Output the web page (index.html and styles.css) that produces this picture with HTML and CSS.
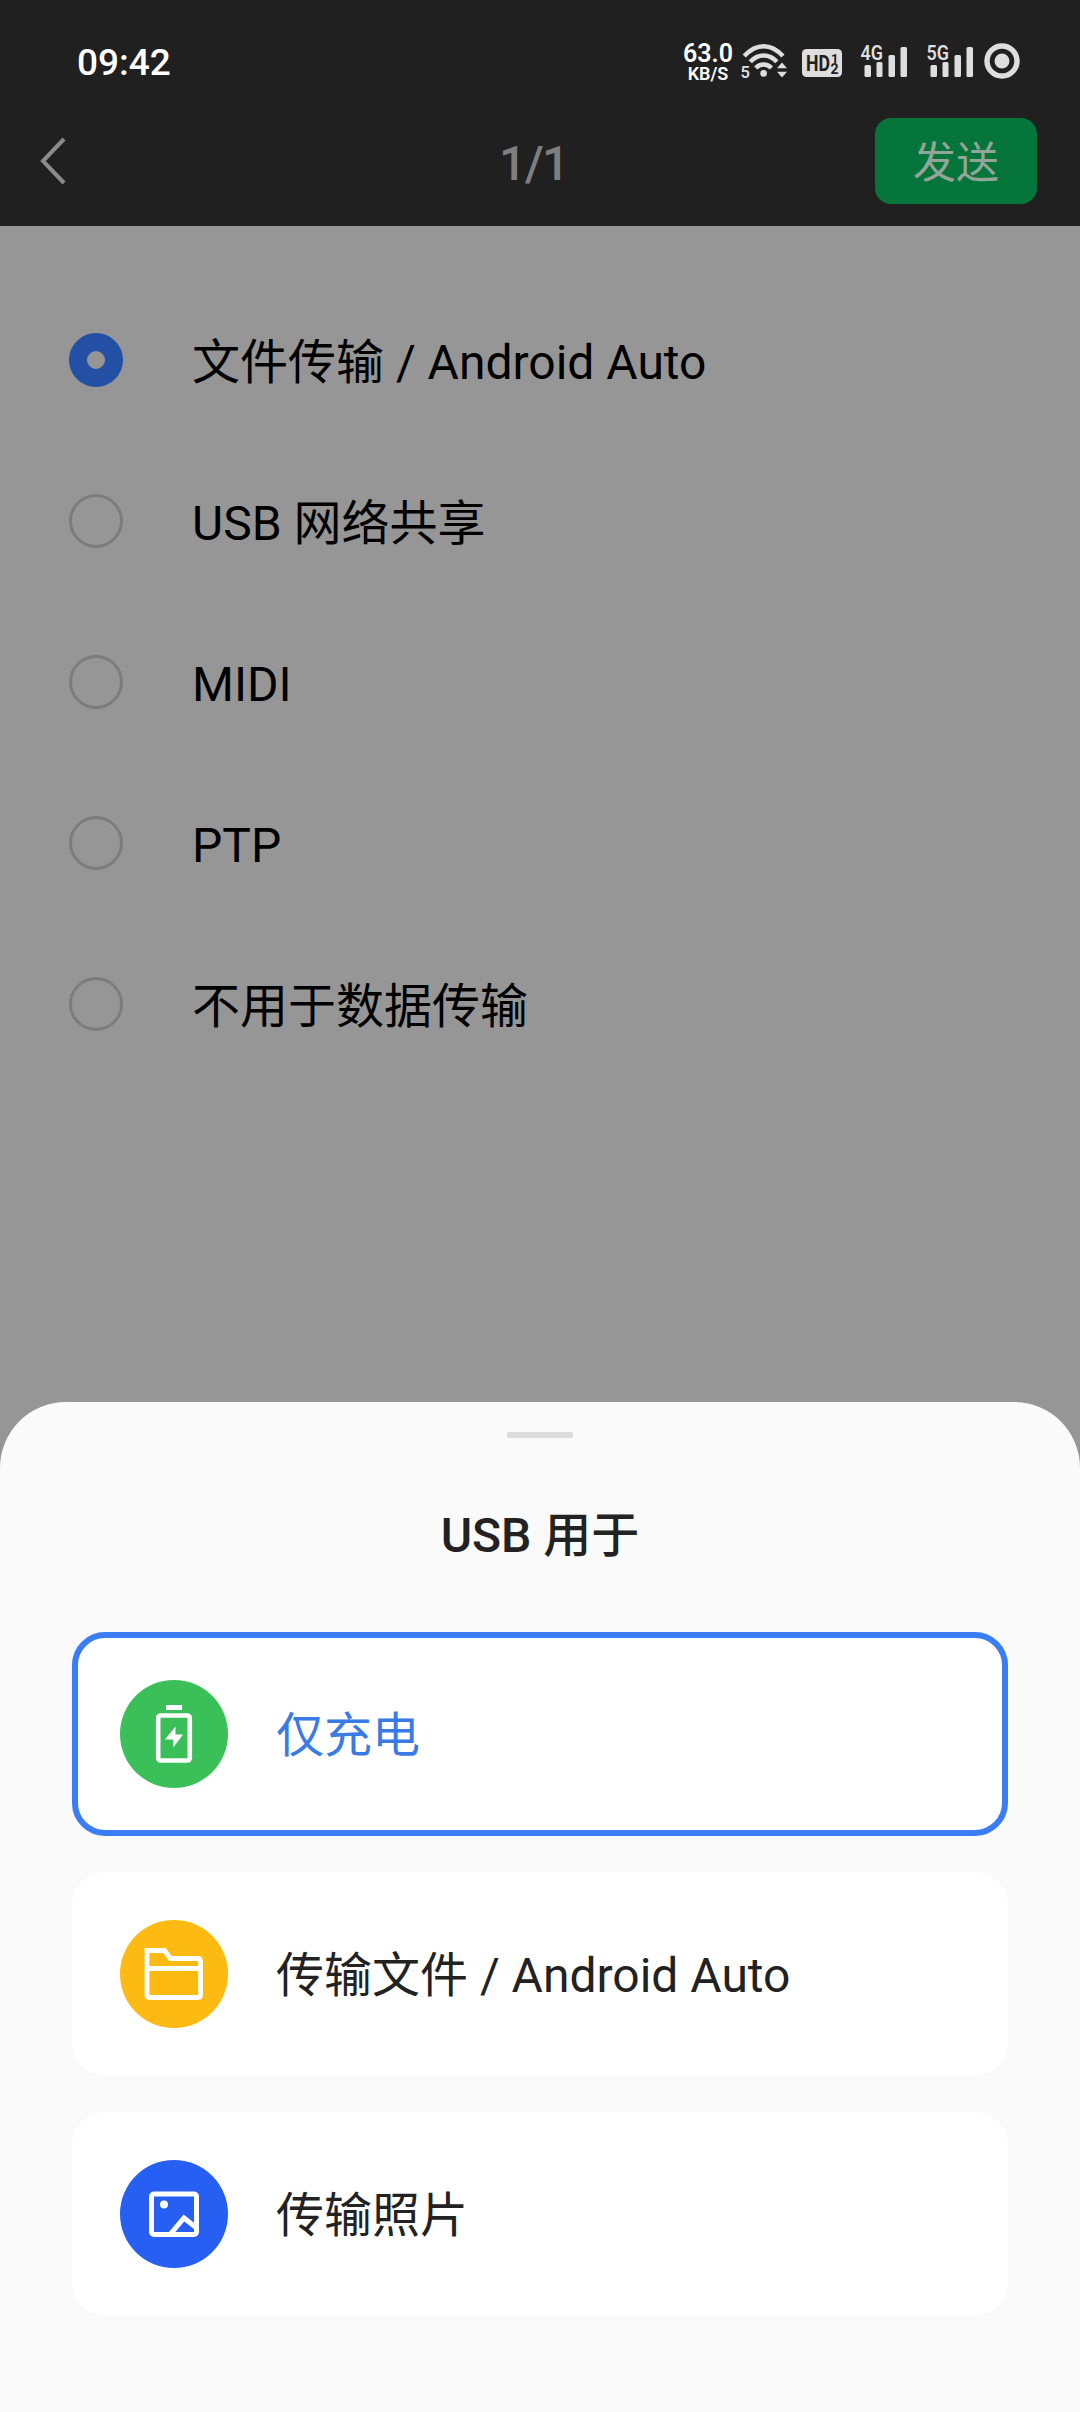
FILE: index.html
```html
<!DOCTYPE html>
<html lang="zh-CN">
<head>
<meta charset="utf-8">
<title>USB 用于</title>
<link rel="stylesheet" href="styles.css">
</head>
<body>
<div class="screen">
  <header class="top">
    <div class="status">
      <span class="clock">09:42</span>
      <div class="indicators">
        <div class="speed"><span class="speed-value">63.0</span><span class="speed-unit">KB/S</span></div>
        <svg class="wifi" width="48" height="36" viewBox="0 0 48 36">
          <g fill="none" stroke="#dedede" stroke-width="4.4">
            <path d="M3.2 13Q12.500 3.200 22.600 3.200T42 13"/>
            <path d="M9.300 18.800Q15 12.500 22.600 12.500T35.900 18.800"/>
            <path d="M14.800 25Q18 21.500 22.600 21.500T30.400 25"/>
          </g>
          <circle cx="22.600" cy="30.400" r="3.300" fill="#dedede"/>
          <path d="M36 25.300 41 19.500 46 25.300ZM36 28.700 41 34.500 46 28.700Z" fill="#dedede"/>
          <text x="-0.500" y="34.700" font-size="16.500" class="badge-text">5</text>
        </svg>
        <svg class="hd" width="40" height="28" viewBox="0 0 40 28">
          <rect width="40" height="28" rx="4.500" fill="#dedede"/>
          <text x="4" y="22" font-size="22" textLength="24" lengthAdjust="spacingAndGlyphs" class="hd-text">HD</text>
          <text x="29" y="13.500" font-size="13" class="hd-text">1</text>
          <text x="28.500" y="25" font-size="14" class="hd-text">2</text>
        </svg>
        <svg class="signal" width="48" height="34" viewBox="0 0 48 34">
          <g fill="#dedede"><rect x="4.500" y="21" width="6.500" height="12" rx="1.500"/><rect x="16.500" y="18" width="6" height="15" rx="1.500"/><rect x="28.500" y="11" width="6.500" height="22" rx="1.500"/><rect x="40.500" y="3" width="6.500" height="30" rx="1.500"/></g>
          <text x="0.500" y="16" font-size="20" textLength="22.500" lengthAdjust="spacingAndGlyphs" class="badge-text">4G</text>
        </svg>
        <svg class="signal" width="48" height="34" viewBox="0 0 48 34">
          <g fill="#dedede"><rect x="4.500" y="21" width="6.500" height="12" rx="1.500"/><rect x="16.500" y="18" width="6" height="15" rx="1.500"/><rect x="28.500" y="11" width="6.500" height="22" rx="1.500"/><rect x="40.500" y="3" width="6.500" height="30" rx="1.500"/></g>
          <text x="0.500" y="16" font-size="20" textLength="22.500" lengthAdjust="spacingAndGlyphs" class="badge-text">5G</text>
        </svg>
        <svg class="record" width="36" height="36" viewBox="0 0 36 36">
          <circle cx="18" cy="18" r="15" fill="none" stroke="#dedede" stroke-width="5.400"/>
          <circle cx="18" cy="18" r="7.500" fill="#dedede"/>
        </svg>
      </div>
    </div>
    <nav class="bar">
      <svg class="back" width="28" height="48" viewBox="0 0 28 48"><path d="M25 2 4 24 25 46" fill="none" stroke="#8b8b8b" stroke-width="4"/></svg>
      <span class="count">1/1</span>
      <button class="send">发送</button>
    </nav>
  </header>
  <main class="options">
    <div class="option"><span class="radio checked"></span><span>文件传输 / Android Auto</span></div>
    <div class="option"><span class="radio"></span><span>USB 网络共享</span></div>
    <div class="option"><span class="radio"></span><span>MIDI</span></div>
    <div class="option"><span class="radio"></span><span>PTP</span></div>
    <div class="option"><span class="radio"></span><span>不用于数据传输</span></div>
  </main>
  <section class="sheet">
    <div class="handle"></div>
    <h1 class="title">USB 用于</h1>
    <div class="cards">
      <div class="card selected">
        <svg class="icon" width="108" height="108" viewBox="0 0 108 108">
          <circle cx="54" cy="54" r="54" fill="#3bbf58"/>
          <path d="M46 25h16v5H46z" fill="#fff"/>
          <rect x="38.200" y="35.500" width="31.600" height="45" rx="2.500" fill="none" stroke="#fff" stroke-width="4.600"/>
          <path d="M55.500 46.500 45 59.500h8.300V67.500L63 54.500H55.500Z" fill="#fff"/>
        </svg>
        <span>仅充电</span>
      </div>
      <div class="card">
        <svg class="icon" width="108" height="108" viewBox="0 0 108 108">
          <circle cx="54" cy="54" r="54" fill="#fdba12"/>
          <path d="M27 30.500H44.500L50.500 38.500H78Q80.500 38.500 80.500 41V75Q80.500 77.500 78 77.500H30Q27 77.500 27 74.500ZM27 48.500H80.500" fill="none" stroke="#fff" stroke-width="4.800"/>
        </svg>
        <span>传输文件 / Android Auto</span>
      </div>
      <div class="card">
        <svg class="icon" width="108" height="108" viewBox="0 0 108 108">
          <circle cx="54" cy="54" r="54" fill="#285ff3"/>
          <rect x="31.500" y="34" width="45" height="40.500" rx="2.500" fill="none" stroke="#fff" stroke-width="5"/>
          <circle cx="44" cy="44.500" r="4" fill="#fff"/>
          <path d="M50 74.500 64 58 76 67.500" fill="none" stroke="#fff" stroke-width="5"/>
        </svg>
        <span>传输照片</span>
      </div>
    </div>
  </section>
</div>
</body>
</html>
```

FILE: styles.css
```css
* { box-sizing: border-box; }
body {
  margin: 0;
  font-family: Roboto, "Noto Sans CJK SC", sans-serif;
}
svg { display: block; flex: none; overflow: visible; }
.screen {
  width: 1080px;
  height: 2412px;
  display: flex;
  flex-direction: column;
  background: #969696;
  overflow: hidden;
}
.top {
  height: 226px;
  flex: none;
  background: #202020;
}
.status {
  height: 118px;
  padding: 41px 60px 0 77px;
  display: flex;
  justify-content: space-between;
  align-items: flex-start;
}
.clock {
  font-size: 37px;
  line-height: 44px;
  font-weight: 500;
  color: #fff;
}
.indicators { display: flex; align-items: flex-start; }
.speed {
  width: 50px;
  display: flex;
  flex-direction: column;
  align-items: center;
  color: #fff;
  font-weight: 600;
}
.speed-value { font-size: 25px; line-height: 25px; }
.speed-unit { font-size: 18px; line-height: 16px; }
.wifi { margin: 2px 0 0 8px; }
.hd { margin: 8px 0 0 13px; }
.signal { margin: 3px 0 0 18px; }
.record { margin: 2px 0 0 10px; }
.badge-text { fill: #dedede; font-weight: 600; }
.signal .badge-text { stroke: #202020; stroke-width: 3px; paint-order: stroke; }
.hd-text { fill: #202020; font-weight: 700; }
.bar {
  height: 86px;
  padding: 0 43px 0 39px;
  display: flex;
  align-items: center;
  justify-content: space-between;
}
.back { margin-right: 134px; }
.count {
  margin-right: 9px;
  padding-top: 5px;
  font-size: 48px;
  font-weight: 500;
  line-height: 56px;
  letter-spacing: -1.5px;
  color: #7f7f7f;
}
.send {
  width: 162px;
  height: 86px;
  padding: 4px 0 0;
  border: 0;
  border-radius: 16px;
  background: #05753c;
  color: #93a596;
  font: 43px/82px Roboto, "Noto Sans CJK SC", sans-serif;
}
.options {
  height: 1176px;
  padding-top: 53px;
  flex: none;
  font-size: 48px;
  line-height: 56px;
  color: #000;
}
.option {
  height: 161px;
  padding-left: 69px;
  display: flex;
  align-items: center;
  gap: 69px;
}
.option span:last-child { padding-top: 7px; }
.radio {
  width: 54px;
  height: 54px;
  border: 3px solid #7c7c7c;
  border-radius: 50%;
}
.radio.checked { border: 18px solid #2350a5; }
.sheet {
  flex: 1;
  padding: 30px 72px 0;
  border-radius: 66px 66px 0 0;
  background: #fafafa;
  color: #222;
}
.handle {
  width: 66px;
  height: 6px;
  margin: 0 auto;
  border-radius: 2px;
  background: #dcdcdc;
}
.title {
  margin: 62px 0 0;
  height: 132px;
  font-size: 48px;
  line-height: 72px;
  font-weight: 500;
  text-align: center;
}
.cards {
  display: flex;
  flex-direction: column;
  gap: 36px;
}
.card {
  height: 204px;
  padding: 0 42px;
  border: 6px solid #fff;
  border-radius: 33px;
  background: #fff;
  display: flex;
  align-items: center;
  gap: 48px;
  font-size: 48px;
  line-height: 56px;
}
.card span { padding-top: 4px; }
.selected { border-color: #3a7df5; color: #3a7ae4; }
```
